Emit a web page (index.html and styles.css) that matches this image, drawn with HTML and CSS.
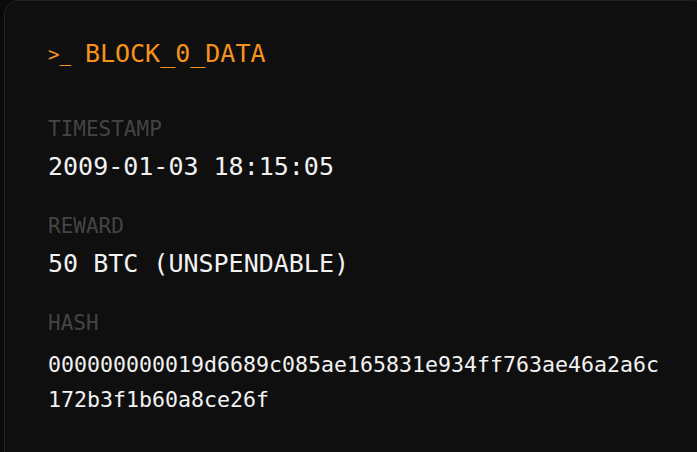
FILE: index.html
```html
<!DOCTYPE html>
<html lang="en">
<head>
<meta charset="utf-8">
<title>Block 0 Data</title>
<link rel="stylesheet" href="styles.css">
</head>
<body>
  <section class="card">
    <h2 class="title"><span class="prompt">&gt;_</span><span>BLOCK_0_DATA</span></h2>
    <div class="fields">
      <div class="field">
        <div class="label">TIMESTAMP</div>
        <div class="value">2009-01-03 18:15:05</div>
      </div>
      <div class="field">
        <div class="label">REWARD</div>
        <div class="value">50 BTC (UNSPENDABLE)</div>
      </div>
      <div class="field">
        <div class="label">HASH</div>
        <div class="value hash">000000000019d6689c085ae165831e934ff763ae46a2a6c172b3f1b60a8ce26f</div>
      </div>
    </div>
  </section>
</body>
</html>
```

FILE: styles.css
```css
html, body {
  margin: 0;
  padding: 0;
  background: #0a0a0a;
  overflow: hidden;
  height: 100%;
}

body {
  padding-left: 4px;
  font-family: "DejaVu Sans Mono", "Liberation Mono", monospace;
}

.card {
  box-sizing: border-box;
  width: 703px;
  min-height: 470px;
  background: #0f0f0f;
  border: 1px solid #222222;
  border-radius: 14px;
  padding: 37px 43px 43px;
}

.title {
  margin: 0 0 45px;
  display: flex;
  align-items: center;
  gap: 14px;
  height: 32px;
  font-size: 25px;
  line-height: 32px;
  font-weight: normal;
  color: #f7931a;
}

.prompt {
  font-size: 19px;
}

.fields {
  display: flex;
  flex-direction: column;
  gap: 29px;
}

.field {
  display: flex;
  flex-direction: column;
  gap: 8px;
}

.label {
  font-size: 21px;
  line-height: 28px;
  color: #444444;
}

.value {
  font-size: 25px;
  line-height: 32px;
  color: #f2f2f2;
}

.hash {
  margin-top: 2px;
  font-size: 21.6px;
  line-height: 35px;
  width: 616px;
  word-break: break-all;
}
```
